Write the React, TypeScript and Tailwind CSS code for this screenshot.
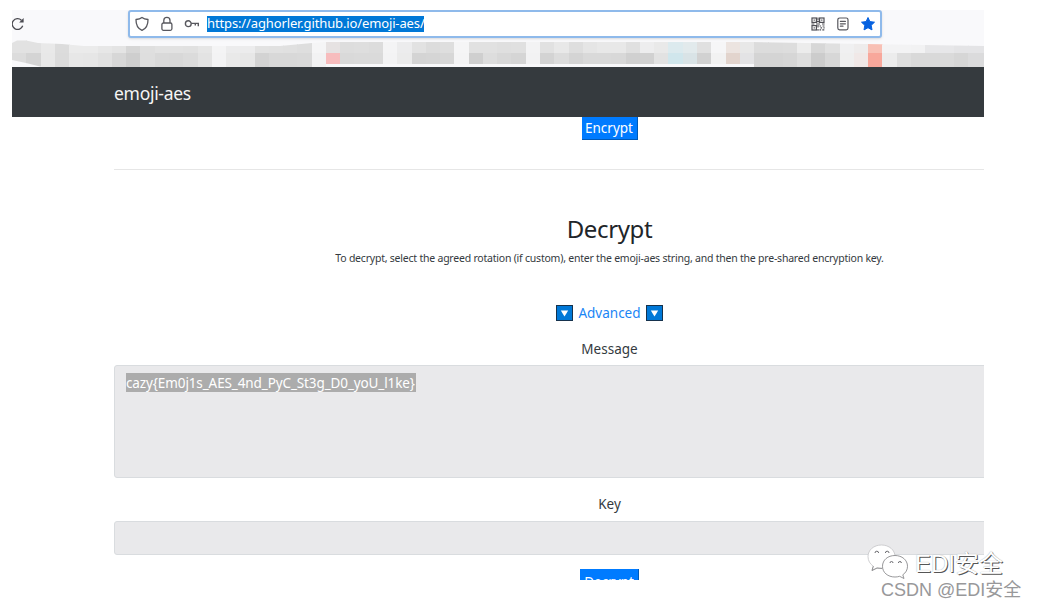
import type { ReactNode } from "react";

const CELL = 14.27;

// One entry per blurred bookmark cell: [upper shade, lower shade]
const cells: [string, string][] = [
  ["#e2e2e2", "#dcdcdc"], ["#e2e2e2", "#d4d4d4"], ["#e9e9e9", "#e8e8e8"], ["#dcdcdc", "#dbdbdb"],
  ["#ebebeb", "#e7e7e7"], ["#ebebeb", "#e6e6e6"], ["#e7e7e7", "#e1e1e1"], ["#e4e4e4", "#d7d7d7"],
  ["#d6d6d6", "#cecece"], ["#dfdfdf", "#dedede"], ["#e2e2e2", "#d9d9d9"], ["#e2e2e2", "#d8d8d8"],
  ["#e1e1e1", "#dbdbdb"], ["#e6e6e6", "#e3e3e3"], ["#f4f4f5", "#f3f3f4"], ["#ececed", "#e9e9e9"],
  ["#ececed", "#e7e7e7"], ["#e2e2e2", "#d3d3d3"], ["#e1e1e1", "#d8d8d8"], ["#e0e0e0", "#d8d8d8"],
  ["#dedede", "#d9d9d9"], ["#f5f5f6", "#f2f2f3"], ["#e6e2e2", "#f7bcbd"], ["#dddddd", "#d9d9d9"],
  ["#dedede", "#dadada"], ["#dcdcdc", "#dadada"], ["#f4f4f5", "#f3f3f4"], ["#ececed", "#ebebeb"],
  ["#e2e2e2", "#d4d4d4"], ["#dcdcdc", "#d5d5d5"], ["#dedede", "#d7d7d7"], ["#f5f5f6", "#f4f4f5"],
  ["#e1e1e1", "#cfcfcf"], ["#e1e1e1", "#dddddd"], ["#dfdfdf", "#d8d8d8"], ["#e0e0e0", "#d5d5d5"],
  ["#f3f3f4", "#f2f2f3"], ["#e1e1e1", "#d3d3d3"], ["#e8e8e8", "#dcdcdc"], ["#dedede", "#d4d4d4"],
  ["#e5e5e5", "#d9d9d9"], ["#e8e8e8", "#d9d9d9"], ["#e8e8e8", "#d8d8d8"], ["#e0e0e0", "#d0d0d0"],
  ["#ededee", "#d1d1d1"], ["#e9e9e9", "#e2e2e2"], ["#dceaee", "#d0e6ec"], ["#e2eaec", "#d9e3e6"],
  ["#e0e0e0", "#d1d1d1"], ["#f6f6f7", "#f2f2f2"], ["#ece4e0", "#e2d4cd"], ["#e8e8e8", "#e3e3e5"],
  ["#dcdcdc", "#d4d4d4"], ["#dcdcdc", "#d4d4d4"], ["#dddddd", "#d6d6d6"], ["#ececec", "#dedede"],
  ["#d7d7d7", "#cccccc"], ["#e0e0e0", "#d7d7d7"], ["#f0f0f1", "#efefef"], ["#eeecec", "#f0e8e7"],
  ["#f8c0b5", "#f8a79b"], ["#f3f3f4", "#ececec"], ["#f3f3f4", "#dedede"], ["#f2f2f3", "#d9d9d9"],
  ["#e7e7e9", "#d9d9d9"], ["#e7e7e9", "#dadada"], ["#e4e4e6", "#d6d6d6"], ["#e4e4e6", "#dbdbdc"],
  ["#e4e4e6", "#dbdbdc"],
];

function BookmarkStrip() {
  return (
    <svg className="block h-[29px] w-[972px]" viewBox="0 0 972 29" shapeRendering="crispEdges">
      <defs>
        <clipPath id="strip">
          <path d="M0 5 L5 2.5 L14 2.5 L26 5 L50 6 L72 8 H268 L300 5 L312 4 H740 L972 8 V29 H30 L14 25 L0 22Z" />
        </clipPath>
      </defs>
      <g clipPath="url(#strip)">
        {cells.map(([top, bottom], i) => (
          <g key={i}>
            <rect x={i * CELL} y="0" width={CELL + 0.5} height="15" fill={top} />
            <rect x={i * CELL} y="15" width={CELL + 0.5} height="14" fill={bottom} />
          </g>
        ))}
      </g>
      <path d="M314 27.5 H742" stroke="#f8f8fa" strokeWidth="3" />
    </svg>
  );
}

function ReloadIcon() {
  return (
    <svg className="h-4 w-4" viewBox="0 0 16 16" fill="none" stroke="#4a4a50" strokeWidth="1.3">
      <path d="M12.7 9.8 A5.4 5.4 0 1 1 11.4 4.2" />
      <path d="M13.6 2 V6.5 H9.1Z" fill="#4a4a50" stroke="none" />
    </svg>
  );
}

function ShieldIcon() {
  return (
    <svg className="h-4 w-4" viewBox="0 0 16 16" fill="none" stroke="#58585e" strokeWidth="1.3" strokeLinejoin="round">
      <path d="M8 1.4 C9.6 2.7 11.8 3.3 14 3.5 C14.1 8.8 12 12.7 8 14.4 C4 12.7 1.9 8.8 2 3.5 C4.2 3.3 6.4 2.7 8 1.4Z" />
    </svg>
  );
}

function LockIcon() {
  return (
    <svg className="h-4 w-4" viewBox="0 0 16 16" fill="none" stroke="#58585e" strokeWidth="1.3">
      <rect x="2.9" y="7" width="10" height="7.3" rx="1.5" />
      <path d="M4.8 7 V4.5 A3.1 3.1 0 0 1 11 4.5 V7" />
    </svg>
  );
}

function KeyIcon() {
  return (
    <svg className="h-4 w-4" viewBox="0 0 16 16" fill="none" stroke="#58585e" strokeWidth="1.4">
      <circle cx="4.3" cy="7.7" r="2.9" />
      <path d="M7.2 7.4 H15 M11.3 7.4 V9.6 M14.3 7.4 V10.2" />
    </svg>
  );
}

function QrIcon() {
  return (
    <svg className="h-[14px] w-[14px]" viewBox="0 0 14 14" fill="none" stroke="#4f4f55" strokeWidth="1.2">
      <rect x="1" y="1" width="4.4" height="4.4" />
      <rect x="8.6" y="1" width="4.4" height="4.4" />
      <rect x="1" y="8.6" width="4.4" height="4.4" />
      <path d="M2.6 3.2h1.2M10.2 3.2h1.2M2.6 10.8h1.2M7 .5v3M5.5 4.6H8M.4 7h3M5 7h4M11 7h2.6M7 8v2.5M7 12v1.8M8.5 9h1.6M11.5 9h2M9.5 10.9h1.6M12.4 10.9h1.2M8.5 12.9h1.6M11.3 12.9h2" />
    </svg>
  );
}

function ReaderIcon() {
  return (
    <svg className="h-[14px] w-3" viewBox="0 0 12 14" fill="none" stroke="#58585e" strokeWidth="1.2" strokeLinecap="round">
      <rect x=".8" y="1" width="10.2" height="11.8" rx="1.8" />
      <path d="M3.4 4.4H8.4M3.4 6.8H8.4M3.4 9.2H6" />
    </svg>
  );
}

function StarIcon() {
  return (
    <svg className="h-4 w-4" viewBox="0 0 16 16" fill="#0561e0" stroke="#0561e0" strokeWidth="1" strokeLinejoin="round">
      <path d="M8 1.5 L9.9 5.6 L14.5 6.2 L11.2 9.3 L12 13.9 L8 11.7 L4 13.9 L4.8 9.3 L1.5 6.2 L6.1 5.6Z" />
    </svg>
  );
}

function DownButton() {
  return (
    <span className="flex h-4 w-[17px] items-center justify-center border border-[#16324d] bg-[#0078d7]">
      <svg className="h-[7px] w-[9px]" viewBox="0 0 9 7" fill="#fff">
        <path d="M.8 .4H8.2L4.5 6.6Z" />
      </svg>
    </span>
  );
}

function Label({ children }: { children: ReactNode }) {
  return <div className="h-5 text-[13.5px] leading-5 text-[#343a40]">{children}</div>;
}

function WechatIcon() {
  return (
    <svg className="h-[36px] w-[42px]" viewBox="0 0 42 36" fill="#fff" stroke="#7d7d80" strokeWidth=".8">
      <path d="M14.5 1 C6.8 1 1 6 1 12.6 C1 16.6 3 20 6.3 22.2 L5 26.5 L10 24 C11.4 24.4 13 24.5 15 24.4 C25 24 28 18 28 12.5 C28 6 22 1 14.5 1Z" stroke="#c4c4c7" />
      <path d="M6.3 22.2 L5 26.5 L10 24 L15 24.4" fill="none" />
      <path d="M28 11.5 C20.8 11.5 15.5 16 15.5 22.3 C15.5 28.6 20.8 33 28 33 C29.6 33 31.2 32.8 32.6 32.3 L37 34.5 L35.8 30.8 C38.8 28.8 40.5 25.8 40.5 22.3 C40.5 16 35 11.5 28 11.5Z" />
      <path d="M8 9 A1.8 1.8 0 0 1 11.6 9 M18.4 9 A1.8 1.8 0 0 1 22 9 M23 19 A1.5 1.5 0 0 1 26 19 M31.4 19 A1.5 1.5 0 0 1 34.4 19" fill="none" stroke="#6a6a6f" strokeWidth="1" />
    </svg>
  );
}

export default function App() {
  return (
    <div className="relative h-[609px] w-[1037px] overflow-hidden bg-white pt-[10px] pl-3 font-['Noto_Sans','Noto_Sans_CJK_SC',sans-serif]">
      <div className="flex h-[570px] w-[972px] flex-col overflow-hidden">
        <header className="h-[57px] shrink-0 bg-[#f9f9fb]">
          <div className="flex h-7 items-center">
            <div className="-ml-[2px] w-[118px]">
              <ReloadIcon />
            </div>
            <div className="flex h-7 w-[754px] items-center rounded-[3px] border-2 border-[#8fbaeb] bg-white pr-1 pl-1 shadow-sm">
              <div className="flex w-[73px] shrink-0 gap-[9px]">
                <ShieldIcon />
                <LockIcon />
                <KeyIcon />
              </div>
              <span className="h-4 w-[217px] bg-[#0078d7] text-[13px] leading-[15px] tracking-[-0.13px] whitespace-nowrap text-white">
                https://aghorler.github.io/emoji-aes/
              </span>
              <div className="ml-auto flex items-center">
                <QrIcon />
                <span className="ml-3">
                  <ReaderIcon />
                </span>
                <span className="ml-[11px]">
                  <StarIcon />
                </span>
              </div>
            </div>
          </div>
          <BookmarkStrip />
        </header>

        <nav className="flex h-[50px] shrink-0 items-center bg-[#353a3e] pl-[102px] text-[17.5px] tracking-[-0.3px] text-[#f5f5f5]">
          <span className="pt-[3px]">emoji-aes</span>
        </nav>

        <main className="ml-[102px] flex w-[991px] shrink-0 flex-col items-center text-[13.5px]">
          <button className="h-[23px] w-[56px] border-r border-b border-[#0059b8] bg-[#007bff] leading-[22px] text-white">
            Encrypt
          </button>
          <hr className="mt-[29px] w-full border-[#e6e6e6]" />
          <h2 className="mt-[41px] h-9 text-[24px] leading-9 tracking-[-0.35px] text-[#212529]">Decrypt</h2>
          <p className="mt-px h-5 text-[10.5px] leading-5 tracking-[-0.22px] whitespace-nowrap text-[#343a40]">
            To decrypt, select the agreed rotation (if custom), enter the emoji-aes string, and then the pre-shared encryption key.
          </p>
          <div className="mt-[35px] flex h-5 w-[107px] items-center justify-between text-[#1a85f5]">
            <DownButton />
            <span className="leading-5">Advanced</span>
            <DownButton />
          </div>
          <div className="mt-4">
            <Label>Message</Label>
          </div>
          <div className="mt-[6px] h-[113px] w-full rounded-[3px] border border-[#d9dcdf] bg-[#e9e9eb] pt-[7px] pl-[11px]">
            <div className="h-[19px] w-[290px] bg-[#acacac] leading-5 tracking-[-0.11px] whitespace-nowrap text-white">
              {"cazy{Em0j1s_AES_4nd_PyC_St3g_D0_yoU_l1ke}"}
            </div>
          </div>
          <div className="mt-4">
            <Label>Key</Label>
          </div>
          <div className="mt-[7px] h-[34px] w-full rounded-[3px] border border-[#d9dcdf] bg-[#e9e9eb]" />
          <div className="mt-[14px] h-[24px] w-[59px] border-r border-[#0059b8] bg-[#007bff] text-center leading-[27px] text-white">
            Decrypt
          </div>
        </main>
      </div>

      <div className="absolute top-[544px] left-[867px]">
        <WechatIcon />
      </div>
      <div className="absolute top-[546px] left-[915px] font-['Liberation_Sans','Noto_Sans_CJK_SC',sans-serif] text-[24px] leading-9 whitespace-nowrap text-white [text-shadow:1px_1px_0_#555,0_0_1px_#999]">
        EDI安全
      </div>
      <div className="absolute top-[578px] left-[881px] font-['Liberation_Sans','Noto_Sans_CJK_SC',sans-serif] text-[18px] leading-6 whitespace-nowrap text-[#98989a]">
        CSDN @EDI安全
      </div>
    </div>
  );
}
